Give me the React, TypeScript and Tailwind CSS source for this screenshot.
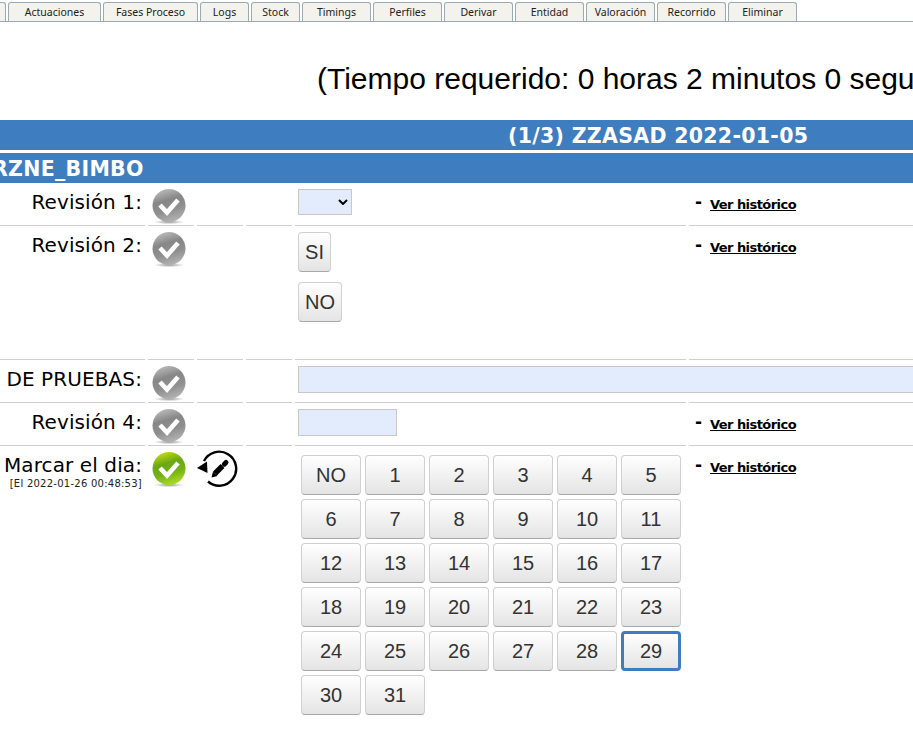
import type { ReactNode } from 'react';

const tabs = [
  { label: 'Actuaciones', w: 'w-[93px]' },
  { label: 'Fases Proceso', w: 'w-[95px]' },
  { label: 'Logs', w: 'w-[49px]' },
  { label: 'Stock', w: 'w-[49px]' },
  { label: 'Timings', w: 'w-[69px]' },
  { label: 'Perfiles', w: 'w-[69px]' },
  { label: 'Derivar', w: 'w-[69px]' },
  { label: 'Entidad', w: 'w-[69px]' },
  { label: 'Valoración', w: 'w-[69px]' },
  { label: 'Recorrido', w: 'w-[69px]' },
  { label: 'Eliminar', w: 'w-[69px]' },
];

const days = ['NO', ...Array.from({ length: 31 }, (_, i) => String(i + 1))];

function CheckBall({ green }: { green?: boolean }) {
  const id = green ? 'ballGreen' : 'ballGrey';
  return (
    <svg width="34" height="36" viewBox="0 0 34 36" className="block">
      <defs>
        <linearGradient id={id} x1="0.3" y1="0" x2="0.6" y2="1">
          <stop offset="0%" stopColor={green ? '#c4de10' : '#bcbcbc'} />
          <stop offset="35%" stopColor={green ? '#6aa814' : '#878787'} />
          <stop offset="65%" stopColor={green ? '#74b316' : '#8f8f8f'} />
          <stop offset="100%" stopColor={green ? '#b0dc22' : '#b4b4b4'} />
        </linearGradient>
        <radialGradient id={`${id}Sh`} cx="50%" cy="50%" r="50%">
          <stop offset="0%" stopColor="#555" stopOpacity="0.6" />
          <stop offset="100%" stopColor="#555" stopOpacity="0" />
        </radialGradient>
      </defs>
      <ellipse cx="17" cy="33" rx="15" ry="2.2" fill={`url(#${id}Sh)`} />
      <circle cx="17" cy="16.5" r="16.5" fill={`url(#${id})`} />
      <path d="M8 16l7 7.5 11-12.5" fill="none" stroke="#fff" strokeWidth="4.6" strokeLinejoin="miter" />
    </svg>
  );
}

function HistoryEdit() {
  return (
    <svg width="42" height="40" viewBox="0 0 42 40" className="block">
      <path d="M7 11A17 17 0 1 1 11 31.5" fill="none" stroke="#000" strokeWidth="2.4" />
      <path d="M0 18l10-6.5 0.5 11.5z" fill="#000" />
      <path d="M14.5 27.5l1.5-6 4.5 4.5z" fill="#000" />
      <path d="M18 23.5l7.5-7.5" fill="none" stroke="#000" strokeWidth="5.4" />
      <path d="M27.3 14.2l1.7-1.7" fill="none" stroke="#000" strokeWidth="5" strokeLinecap="round" />
    </svg>
  );
}

function VerHistorico() {
  return (
    <div className="flex items-start pl-[6px] pt-[13px] font-['DejaVu_Sans',sans-serif]">
      <span className="w-[15px] text-[17px] leading-[12px] font-bold text-black">-</span>
      <a className="text-[13px] leading-[18px] font-bold text-black underline tracking-[-0.55px]">Ver histórico</a>
    </div>
  );
}

function Row({ label, note, green, edit, h, children, link = true }: {
  label: string;
  note?: string;
  green?: boolean;
  edit?: boolean;
  h: string;
  children: ReactNode;
  link?: boolean;
}) {
  const last = Boolean(note);
  const cell = last ? '' : 'border-b border-[#cfcfcf]';
  return (
    <div className={`grid grid-cols-[145px_46px_46px_46px_391px_1fr] gap-x-[3px] ${h}`}>
      <div className={`${cell} pr-[3px] text-right font-['DejaVu_Sans',sans-serif] whitespace-nowrap text-black`}>
        <div className="flex flex-col items-end pt-[7px] text-[20px] leading-[24px] tracking-[0.1px]">{label}</div>
        {note && <div className="pt-[1px] text-[10px] leading-[11px] tracking-[0.25px] text-[#222]">{note}</div>}
      </div>
      <div className={`${cell} pl-[4px] pt-[6px]`}><CheckBall green={green} /></div>
      <div className={`${cell} pt-[4px]`}>{edit && <HistoryEdit />}</div>
      <div className={cell} />
      <div className={`${cell} pl-[3px]`}>{children}</div>
      <div className={cell}>{link && <VerHistorico />}</div>
    </div>
  );
}

function Btn({ children, className = '', active }: { children: ReactNode; className?: string; active?: boolean }) {
  const border = active
    ? 'border-[3px] border-[#3f7dc1]'
    : 'border border-[#d0d0d0] border-b-[#a8a8a8]';
  return (
    <button className={`h-[40px] rounded-[4px] ${border} bg-gradient-to-b from-white to-[#e4e4e4] text-[20px] leading-none text-[#333] font-['Liberation_Sans',sans-serif] ${className}`}>
      {children}
    </button>
  );
}

export default function App() {
  return (
    <div className="w-[913px] h-[742px] overflow-hidden bg-white">
      {/* Pestañas */}
      <div className="relative flex h-[22px] items-end gap-[2px] border-b border-[#9aabb5] pl-[8px]">
        <div className="absolute left-0 bottom-0 h-[19px] w-[6px] rounded-tr-[3px] border-r border-t border-[#9aabb5] bg-[#f3f2ec]" />
        {tabs.map((t) => (
          <div
            key={t.label}
            className={`${t.w} h-[19px] rounded-t-[3px] border border-b-0 border-[#9aabb5] bg-[#f3f2ec] text-center font-['Noto_Sans',sans-serif] text-[10.5px] leading-[19px] text-[#222]`}
          >
            {t.label}
          </div>
        ))}
      </div>

      <div className="h-[98px] whitespace-nowrap pl-[317px] pt-[39px] font-['Liberation_Sans',sans-serif] text-[30px] leading-[36px] text-black">
        (Tiempo requerido: 0 horas 2 minutos 0 segundos)
      </div>

      <div className="mb-[3px] h-[30px] bg-[#3f7dc1] pl-[508px] font-['DejaVu_Sans',sans-serif] text-[20.5px] leading-[32px] tracking-[0.3px] font-bold text-white whitespace-nowrap">
        (1/3) ZZASAD 2022-01-05
      </div>
      <div className="-ml-[8px] h-[30px] bg-[#3f7dc1] font-['DejaVu_Sans',sans-serif] text-[20.5px] leading-[32px] tracking-[0.3px] font-bold text-white whitespace-nowrap">
        RZNE_BIMBO
      </div>

      <Row label="Revisión 1:" h="h-[43px]">
        <div className="pt-[6px]">
          <div className="flex h-[26px] w-[54px] items-center justify-end border border-[#c8c8c8] bg-[#e2ecfd] pr-[3px]">
            <svg width="10" height="6" viewBox="0 0 10 6"><path d="M1 1l4 4 4-4" fill="none" stroke="#000" strokeWidth="2" /></svg>
          </div>
        </div>
      </Row>

      <Row label="Revisión 2:" h="h-[134px]">
        <div className="flex flex-col items-start gap-[10px] pt-[6px]">
          <Btn className="w-[33px]">SI</Btn>
          <Btn className="w-[44px]">NO</Btn>
        </div>
      </Row>

      <Row label="DE PRUEBAS:" h="h-[43px]" link={false}>
        <div className="mt-[6px] h-[27px] w-[700px] border border-[#c8c8c8] bg-[#e2ecfd]" />
      </Row>

      <Row label="Revisión 4:" h="h-[43px]">
        <div className="mt-[6px] h-[27px] w-[99px] border border-[#c8c8c8] bg-[#e2ecfd]" />
      </Row>

      <Row label="Marcar el dia:" note="[El 2022-01-26 00:48:53]" green edit h="h-[280px]">
        <div className="grid grid-cols-[repeat(6,60px)] gap-[4px] pl-[3px] pt-[9px]">
          {days.map((d) => (
            <Btn key={d} className="w-[60px]" active={d === '29'}>
              {d}
            </Btn>
          ))}
        </div>
      </Row>
    </div>
  );
}
